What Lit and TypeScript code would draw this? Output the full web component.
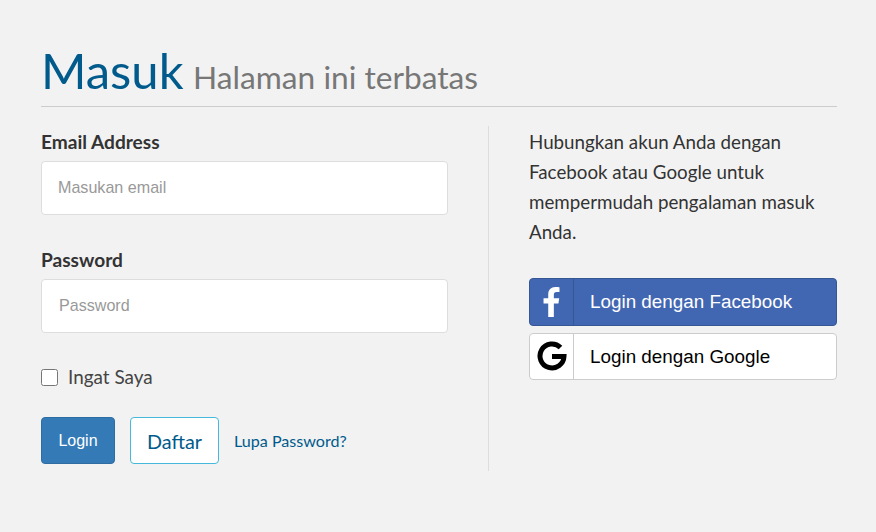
import { LitElement, html, css } from "lit";
import { customElement } from "lit/decorators.js";

@customElement("app-root")
export class AppRoot extends LitElement {
  static styles = css`
    :host { display: block; height: 532px; background: #f2f2f2; font-family: Lato, sans-serif; color: #333; overflow: hidden; }
    * { box-sizing: border-box; }
    .page { padding: 41px 39px 0 41px; }
    .head { height: 66px; border-bottom: 1px solid #ccc; margin: 0; font-weight: 400; font-size: 49px; line-height: 58px; color: #005b8c; white-space: nowrap; }
    .head small { font-size: 31.700px; color: #777; margin-left: -3px; }
    .cols { display: flex; margin-top: 19px; height: 345px; }
    .left { flex: none; box-sizing: content-box; width: 407px; padding: 5px 40px 0 0; border-right: 1px solid #ddd; }
    .right { flex: 1; padding-left: 40px; }
    label.f { display: block; font-weight: 700; font-size: 19.100px; line-height: 22px; margin-bottom: 8px; color: #333; }
    .group { margin-bottom: 34px; }
    .input { display: block; width: 100%; height: 54px; border: 1px solid #ddd; border-radius: 4px; background: #fff; padding: 0 16px 2px; font: 16.100px "Liberation Sans", sans-serif; color: #333; outline: none; }
    .input.pw { padding-left: 17px; }
    .input::placeholder { color: #999; opacity: 1; }
    .check { display: flex; align-items: center; gap: 10px; font-size: 18.900px; line-height: 24px; height: 24px; margin-top: -2px; color: #444; }
    .check input { width: 17px; height: 17px; margin: 0; flex: none; }
    .actions { display: flex; align-items: center; margin-top: 28px; }
    .btn { display: flex; align-items: center; justify-content: center; height: 47px; border-radius: 4px; }
    .login { width: 74px; background: #337ab7; border: 1px solid #2e6da4; color: #fff; font: 16px "Liberation Sans", sans-serif; margin-right: 15px; }
    .daftar { width: 89px; background: #fff; border: 1px solid #46b8da; color: #005b8c; font-size: 19.800px; margin-right: 15px; }
    .link { color: #005b8c; font-size: 16.100px; text-decoration: none; }
    .desc { margin: 0; font-size: 18.750px; line-height: 30px; color: #333; padding-top: 1px; }
    .social { display: flex; height: 48px; border-radius: 4px; border: 1px solid #ccc; background: #fff; font: 18.850px "Liberation Sans", sans-serif; color: #000; align-items: center; margin-bottom: 7px; }
    .social.g { height: 47px; }
    .g svg { margin-top: -2px; }
    .socials { margin-top: 31px; }
    .social.fb { background: #4267b2; border-color: #375694; color: #fff; }
    .ico { width: 44px; height: 100%; display: flex; align-items: center; justify-content: center; border-right: 1px solid #ccc; flex: none; }
    .fb .ico { border-right-color: #375694; }
    .social span { padding-left: 16px; }
  `;

  render() {
    return html`
      <div class="page">
        <h1 class="head">Masuk <small>Halaman ini terbatas</small></h1>
        <div class="cols">
          <div class="left">
            <div class="group">
              <label class="f">Email Address</label>
              <input class="input" placeholder="Masukan email" />
            </div>
            <div class="group">
              <label class="f">Password</label>
              <input class="input pw" type="password" placeholder="Password" />
            </div>
            <label class="check"><input type="checkbox" />Ingat Saya</label>
            <div class="actions">
              <a class="btn login">Login</a>
              <a class="btn daftar">Daftar</a>
              <a class="link">Lupa Password?</a>
            </div>
          </div>
          <div class="right">
            <p class="desc">Hubungkan akun Anda dengan Facebook atau Google untuk mempermudah pengalaman masuk Anda.</p>
            <div class="socials">
              <div class="social fb">
                <div class="ico">
                  <svg width="17" height="30" viewBox="0 0 18 32"><path fill="#fff" d="M5.500 32V17.500H0.500V12h5V8c0-5 3-8 7.600-8 2 0 3.900.2 4.400.3v5h-3c-2.400 0-3 1.200-3 3V12h5.700l-.8 5.500h-4.900V32z"/></svg>
                </div>
                <span>Login dengan Facebook</span>
              </div>
              <div class="social g">
                <div class="ico">
                  <svg width="30" height="30" viewBox="0 0 30 30"><path fill="none" stroke="#000" stroke-width="5" d="M23.500 6.500A12 12 0 1 0 27 15.500H15"/></svg>
                </div>
                <span>Login dengan Google</span>
              </div>
            </div>
          </div>
        </div>
      </div>
    `;
  }
}
